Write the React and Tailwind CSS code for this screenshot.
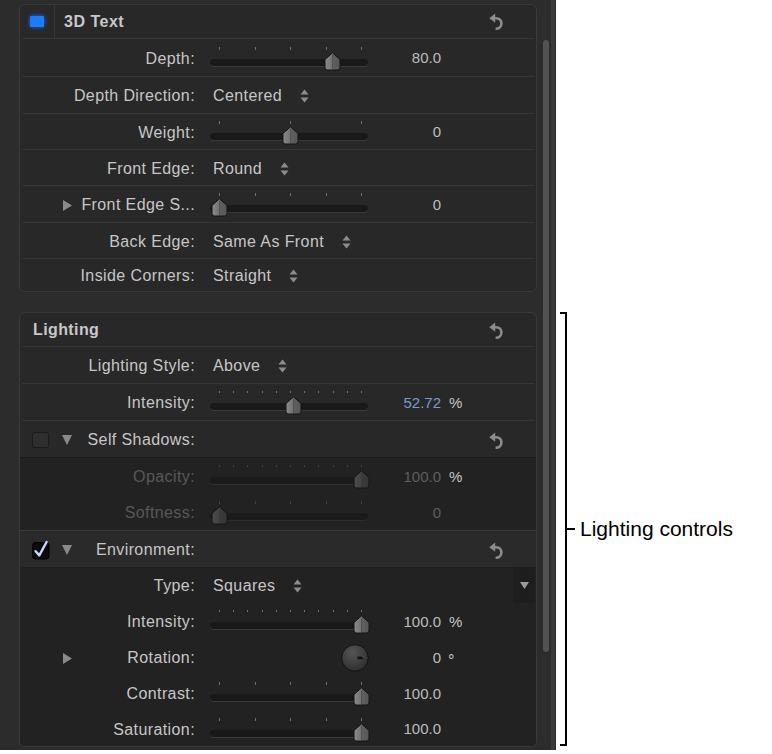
import React from "react";

const LBL = "text-[16px] tracking-[0.4px] text-[#c6c6c6] whitespace-nowrap";
const LBL_DIM = "text-[16px] tracking-[0.4px] text-[#585858] whitespace-nowrap";

function Sep() {
  return <div className="h-px mx-[2px] bg-[#363636]" />;
}

function Reset() {
  return (
    <svg width="14" height="17" viewBox="0 0 14 17">
      <path d="M0.3 5.2 L6.2 0.6 L6.2 9.8 Z" fill="#8c8c8c" />
      <path
        d="M5 5.2 H7 C10.4 5.2 12.4 7.6 12.4 10.5 C12.4 13.4 10.2 15.8 6.6 15.8"
        stroke="#8c8c8c"
        strokeWidth="2.6"
        fill="none"
      />
    </svg>
  );
}

function Arrows() {
  return (
    <svg width="9" height="14" viewBox="0 0 9 14">
      <path d="M0.5 5.6 L4.5 0.6 L8.5 5.6 Z M0.5 8.4 L4.5 13.4 L8.5 8.4 Z" fill="#8c8c8c" />
    </svg>
  );
}

function TriRight() {
  return (
    <svg width="9" height="11" viewBox="0 0 9 11">
      <path d="M0 0 L9 5.5 L0 11 Z" fill="#8a8a8a" />
    </svg>
  );
}

function TriDown() {
  return (
    <svg width="10" height="10" viewBox="0 0 10 10">
      <path d="M0 0 H10 L5 10 Z" fill="#8a8a8a" />
    </svg>
  );
}

function Thumb({ disabled }) {
  const id = disabled ? "thumbGradD" : "thumbGrad";
  return (
    <svg width="17" height="19" viewBox="0 0 17 19">
      <defs>
        <linearGradient id={id} x1="0" y1="0" x2="1" y2="0">
          <stop offset="0" stopColor={disabled ? "#4a4a4a" : "#8a8a8a"} />
          <stop offset="0.48" stopColor={disabled ? "#444444" : "#727272"} />
          <stop offset="0.52" stopColor={disabled ? "#3b3b3b" : "#606060"} />
          <stop offset="1" stopColor={disabled ? "#363636" : "#575757"} />
        </linearGradient>
      </defs>
      <path
        d="M1 7.5 L8.5 0.8 L16 7.5 V15.5 Q16 18 13.5 18 H3.5 Q1 18 1 15.5 Z"
        fill={`url(#${id})`}
        stroke="#141414"
        strokeWidth="1"
      />
      <line x1="8.5" y1="3" x2="8.5" y2="17" stroke={disabled ? "#3a3a3a" : "#4d4d4d"} strokeWidth="0.8" />
    </svg>
  );
}

function Slider({ ticks, value, disabled }) {
  const positions = Array.from({ length: ticks }, (_, i) => 9 + (i * 142) / (ticks - 1));
  const thumbX = 9 + value * 142;
  const short = ticks > 5;
  return (
    <div className="relative w-[158px] h-[24px] shrink-0">
      {positions.map((p, i) => (
        <div
          key={i}
          className={`absolute top-0 w-px ${short ? "h-[2px]" : "h-[3px]"} ${
            disabled ? "bg-[#404040]" : "bg-[#6e6e6e]"
          }`}
          style={{ left: Math.round(p) }}
        />
      ))}
      <div
        className={`absolute left-0 right-0 top-[12px] h-[7px] rounded-full ${
          disabled ? "bg-[#1b1b1b] shadow-[0_1px_0_#2c2c2c]" : "bg-[#191919] shadow-[0_1px_0_#3a3a3a]"
        }`}
      />
      <div className="absolute top-[5px]" style={{ left: Math.round(thumbX - 8.5) }}>
        <Thumb disabled={disabled} />
      </div>
    </div>
  );
}

function LabelArea({ children, label, dim }) {
  return (
    <div className="w-[175px] h-full flex items-center shrink-0">
      {children}
      <span className={`ml-auto ${dim ? LBL_DIM : LBL}`}>{label}</span>
    </div>
  );
}

function SliderRow({ label, ticks, value, text, unit, prefix, dim, blue, h = "h-[35px]", unitBright }) {
  return (
    <div className={`${h} flex items-center pt-[2px]`}>
      <LabelArea label={label} dim={dim}>
        {prefix}
      </LabelArea>
      <div className="ml-[15px]">
        <Slider ticks={ticks} value={value} disabled={dim} />
      </div>
      <div
        className={`w-[73px] text-right text-[15px] whitespace-nowrap ${
          blue ? "text-[#7d9bc8]" : dim ? "text-[#5e5e5e]" : "text-[#bdbdbd]"
        }`}
      >
        {text}
      </div>
      {unit && (
        <span className={`ml-[8px] text-[15px] ${unitBright || !dim ? "text-[#c6c6c6]" : "text-[#5e5e5e]"}`}>
          {unit}
        </span>
      )}
    </div>
  );
}

function PopupRow({ label, text, h = "h-[35px]" }) {
  return (
    <div className={`${h} flex items-center pt-[2px]`}>
      <LabelArea label={label} />
      <span className={`ml-[18px] ${LBL}`}>{text}</span>
      <div className="ml-[18px] flex items-center">
        <Arrows />
      </div>
    </div>
  );
}

function Dial() {
  return (
    <svg width="28" height="28" viewBox="0 0 28 28">
      <defs>
        <radialGradient id="dialG" cx="0.4" cy="0.3" r="0.8">
          <stop offset="0" stopColor="#555555" />
          <stop offset="1" stopColor="#2a2a2a" />
        </radialGradient>
      </defs>
      <circle cx="14" cy="14" r="13.3" fill="url(#dialG)" stroke="#121212" strokeWidth="1" />
      <path d="M16.5 12.4 H21.5 Q23 12.4 23 13.8 Q23 15.2 21.5 15.2 H16.5 Z" fill="#151515" />
      <path d="M21.5 12.6 Q23 12.8 23 13.8" stroke="#777" strokeWidth="0.8" fill="none" />
    </svg>
  );
}

function Checkbox({ checked }) {
  if (!checked) {
    return <div className="w-[17px] h-[16px] rounded-[3px] bg-[#2f2f2f] border border-[#1b1b1b] shrink-0" />;
  }
  return (
    <svg width="18" height="19" viewBox="0 0 18 19" className="shrink-0 overflow-visible">
      <rect x="0.5" y="1.5" width="16.5" height="16.5" rx="3" fill="#0b0b0b" stroke="#000" />
      <path
        d="M3.6 10.2 L7.3 14.4 L14.6 1"
        stroke="#c5d9ff"
        strokeWidth="2.4"
        strokeLinecap="round"
        strokeLinejoin="round"
        fill="none"
      />
    </svg>
  );
}

function ThreeDPanel() {
  return (
    <div className="w-[518px] rounded-[6px] border border-[#3a3a3a] bg-[#282828] flex flex-col">
      <div className="h-[33px] flex items-center">
        <div className="ml-[10px] w-[14px] h-[11px] rounded-[1px] bg-[#1d7bff] shadow-[0_0_4px_#1a6cff] shrink-0" />
        <div className="ml-[10px] w-px h-full bg-[#383838]" />
        <span className="ml-[9px] text-[16px] font-bold tracking-[0.5px] text-[#c8c8c8]">3D Text</span>
        <div className="ml-auto mr-[33px] flex items-center">
          <Reset />
        </div>
      </div>
      <Sep />
      <SliderRow label="Depth:" ticks={5} value={0.8} text="80.0" h="h-[37px]" />
      <Sep />
      <PopupRow label="Depth Direction:" text="Centered" h="h-[36px]" />
      <Sep />
      <SliderRow label="Weight:" ticks={3} value={0.5} text="0" h="h-[35px]" />
      <Sep />
      <PopupRow label="Front Edge:" text="Round" h="h-[35px]" />
      <Sep />
      <SliderRow
        label="Front Edge S..."
        ticks={5}
        value={0}
        text="0"
        h="h-[36px]"
        prefix={
          <div className="ml-[43px] flex items-center">
            <TriRight />
          </div>
        }
      />
      <Sep />
      <PopupRow label="Back Edge:" text="Same As Front" h="h-[35px]" />
      <Sep />
      <PopupRow label="Inside Corners:" text="Straight" h="h-[32px]" />
    </div>
  );
}

function LightingPanel() {
  return (
    <div className="w-[518px] rounded-[6px] border border-[#3a3a3a] bg-[#282828] flex flex-col overflow-hidden">
      <div className="h-[33px] flex items-center pt-[1px]">
        <span className="ml-[13px] text-[16px] font-bold tracking-[0.4px] text-[#c8c8c8]">Lighting</span>
        <div className="ml-auto mr-[33px] flex items-center">
          <Reset />
        </div>
      </div>
      <Sep />
      <PopupRow label="Lighting Style:" text="Above" h="h-[36px]" />
      <Sep />
      <SliderRow label="Intensity:" ticks={11} value={0.5272} text="52.72" unit="%" blue h="h-[36px]" />
      <Sep />
      <div className="h-[36px] flex items-center pt-[2px]">
        <LabelArea label="Self Shadows:">
          <div className="ml-[12px] flex items-center">
            <Checkbox />
          </div>
          <div className="ml-[13px] flex items-center">
            <TriDown />
          </div>
        </LabelArea>
        <div className="ml-auto mr-[33px] flex items-center">
          <Reset />
        </div>
      </div>
      <div className="bg-[#222222] border-t border-[#1a1a1a] flex flex-col">
        <SliderRow label="Opacity:" ticks={11} value={1} text="100.0" unit="%" dim unitBright h="h-[36px]" />
        <SliderRow label="Softness:" ticks={5} value={0} text="0" dim h="h-[36px]" />
      </div>
      <div className="h-[37px] bg-[#2a2a2a] border-t border-[#3a3a3a] flex items-center pt-[2px]">
        <LabelArea label="Environment:">
          <div className="ml-[12px] flex items-center">
            <Checkbox checked />
          </div>
          <div className="ml-[12px] flex items-center">
            <TriDown />
          </div>
        </LabelArea>
        <div className="ml-auto mr-[33px] flex items-center">
          <Reset />
        </div>
      </div>
      <div className="bg-[#222222] flex flex-col">
        <div className="h-[36px] flex items-center">
          <div className="flex-1 h-full flex items-center pt-[2px]">
            <LabelArea label="Type:" />
            <span className={`ml-[18px] ${LBL}`}>Squares</span>
            <div className="ml-[18px] flex items-center">
              <Arrows />
            </div>
          </div>
          <div className="w-[22px] h-full bg-[#1d1d1d] flex items-center justify-center mr-px">
            <svg width="9" height="7" viewBox="0 0 9 7">
              <path d="M0 0 H9 L4.5 7 Z" fill="#9a9a9a" />
            </svg>
          </div>
        </div>
        <SliderRow label="Intensity:" ticks={11} value={1} text="100.0" unit="%" h="h-[36px]" />
        <div className="h-[36px] flex items-center pt-[2px]">
          <LabelArea label="Rotation:">
            <div className="ml-[43px] flex items-center">
              <TriRight />
            </div>
          </LabelArea>
          <div className="ml-[146px] flex items-center">
            <Dial />
          </div>
          <div className="w-[72px] text-right text-[15px] text-[#bdbdbd]">0</div>
          <span className="ml-[7px] text-[16px] text-[#c6c6c6] self-start mt-[8px]">°</span>
        </div>
        <SliderRow label="Contrast:" ticks={5} value={1} text="100.0" h="h-[36px]" />
        <SliderRow label="Saturation:" ticks={5} value={1} text="100.0" h="h-[35px]" />
      </div>
    </div>
  );
}

export default function App() {
  return (
    <div className="w-[772px] h-[754px] bg-white flex font-['Liberation_Sans',Arial,sans-serif]">
      <div className="w-[556px] h-[750px] bg-[#2c2c2c] flex shrink-0">
        <div className="pl-[19px] pt-[4px] flex flex-col gap-[20px]">
          <ThreeDPanel />
          <LightingPanel />
        </div>
        <div className="ml-[6px] w-[6px] mt-[40px] h-[612px] rounded-full bg-[#525252]" />
        <div className="ml-[2px] w-[4px] h-full bg-[#3a3a3a]" />
      </div>
      <div className="ml-[4px] mt-[312px] h-[434px] flex">
        <div className="w-[7px] h-full border-t-2 border-b-2 border-r-2 border-black" />
        <div className="flex items-center">
          <div className="w-[8px] h-[2px] bg-black" />
          <span className="ml-[5px] text-[21px] text-black whitespace-nowrap">Lighting controls</span>
        </div>
      </div>
    </div>
  );
}
